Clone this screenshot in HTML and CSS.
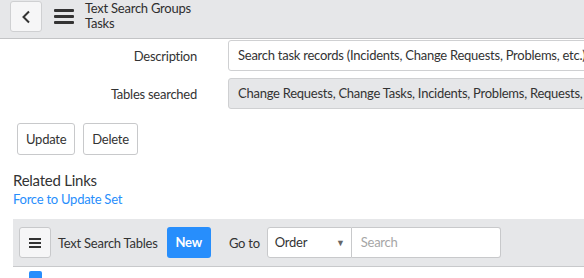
FILE: index.html
```html
<!DOCTYPE html>
<html>
<head>
  <title>Text Search Groups - Tasks</title>
  <link rel="stylesheet" href="styles.css">
</head>
<body>

  <div class="header">
    <div class="back-btn">
      <svg width="10" height="14" viewBox="0 0 10 14"><path d="M8 1.5 L2.5 7 L8 12.5" fill="none" stroke="#333" stroke-width="2"/></svg>
    </div>
    <div class="menu-icon"><span></span><span></span><span></span></div>
    <div class="title">
      <div>Text Search Groups</div>
      <div>Tasks</div>
    </div>
  </div>

  <div class="form">
    <div class="row">
      <div class="label">Description</div>
      <div class="field">Search task records (Incidents, Change Requests, Problems, etc.)</div>
    </div>
    <div class="row">
      <div class="label">Tables searched</div>
      <div class="field readonly">Change Requests, Change Tasks, Incidents, Problems, Requests,</div>
    </div>
  </div>

  <div class="buttons">
    <div class="btn">Update</div>
    <div class="btn">Delete</div>
  </div>

  <div class="related">
    <div class="related-title">Related Links</div>
    <a href="#">Force to Update Set</a>
  </div>

  <div class="list-bar">
    <div class="list-menu">
      <svg width="12" height="10" viewBox="0 0 12 10"><rect x="0" y="0" width="12" height="2" fill="#333"/><rect x="0" y="4" width="12" height="2" fill="#333"/><rect x="0" y="8" width="12" height="2" fill="#333"/></svg>
    </div>
    <div class="list-title">Text Search Tables</div>
    <div class="btn-new">New</div>
    <div class="goto">Go to</div>
    <div class="select">Order<span class="arrow">&#9660;</span></div>
    <div class="search">Search</div>
  </div>

  <div class="check"></div>

</body>
</html>
```

FILE: styles.css
```css
body {
    margin: 0;
    font-family: Lato, "Open Sans", sans-serif;
    font-size: 13px;
    letter-spacing: -0.25px;
    color: #333;
    background: #fff;
    overflow: hidden;
}

.header {
    display: flex;
    align-items: flex-start;
    height: 38px;
    background: #e6e7e9;
    border-bottom: 1px solid #c3c4c6;
}
.back-btn {
    margin: 1px 0 0 10px;
    width: 30px;
    height: 29px;
    background: #f6f6f7;
    border: 1px solid #cfd0d2;
    border-radius: 3px;
    display: flex;
    align-items: center;
    justify-content: center;
}
.menu-icon {
    margin: 9px 0 0 12px;
    width: 20px;
    display: flex;
    flex-direction: column;
    gap: 3px;
}
.menu-icon span {
    display: block;
    height: 3px;
    background: #333;
    border-radius: 1px;
}
.title {
    margin: 1px 0 0 11px;
    line-height: 15px;
    color: #2e2e2e;
}

.form {
    margin-top: 1px;
    overflow: hidden;
}
.row {
    display: flex;
    align-items: center;
    margin-bottom: 7px;
}
.label {
    flex: none;
    width: 197px;
    text-align: right;
}
.field {
    flex: none;
    margin-left: 31px;
    width: 420px;
    height: 29px;
    line-height: 29px;
    padding: 0 9px;
    border: 1px solid #cfd0d2;
    border-radius: 3px;
    white-space: nowrap;
}
.field.readonly {
    background: #e6e7e9;
}

.buttons {
    display: flex;
    gap: 8px;
    margin: 7px 0 0 17px;
}
.btn {
    height: 30px;
    line-height: 30px;
    padding: 0 8px;
    border: 1px solid #c8c9cb;
    border-radius: 3px;
    background: #fff;
}

.related {
    margin: 16px 0 0 13px;
}
.related-title {
    font-size: 15px;
    line-height: 19px;
}
.related a {
    display: block;
    color: #278efc;
    text-decoration: none;
    line-height: 18px;
}

.list-bar {
    margin: 11px 0 0 13px;
    height: 47px;
    background: #e6e7e9;
    border-bottom: 1px solid #c8c9cb;
    display: flex;
    align-items: center;
    padding-left: 6px;
}
.list-menu {
    width: 30px;
    height: 29px;
    border: 1px solid #c8c9cb;
    border-radius: 3px;
    background: #f6f6f7;
    display: flex;
    align-items: center;
    justify-content: center;
}
.list-title {
    margin-left: 7px;
}
.btn-new {
    margin-left: 9px;
    height: 31px;
    line-height: 31px;
    padding: 0 9px;
    background: #278efc;
    color: #fff;
    font-weight: bold;
    border-radius: 3px;
}
.goto {
    margin-left: 18px;
}
.select {
    margin-left: 7px;
    width: 76px;
    height: 29px;
    line-height: 29px;
    padding-left: 7px;
    background: #fff;
    border: 1px solid #c8c9cb;
    border-radius: 3px 0 0 3px;
    position: relative;
}
.arrow {
    position: absolute;
    right: 6px;
    top: 0;
    font-size: 9px;
    color: #666;
}
.search {
    width: 139px;
    height: 29px;
    line-height: 29px;
    padding-left: 9px;
    background: #fff;
    border: 1px solid #c8c9cb;
    border-left: none;
    border-radius: 0 3px 3px 0;
    color: #a6a6a6;
}

.check {
    margin: 4px 0 0 29px;
    width: 13px;
    height: 13px;
    background: #278efc;
    border-radius: 2px;
}
```
